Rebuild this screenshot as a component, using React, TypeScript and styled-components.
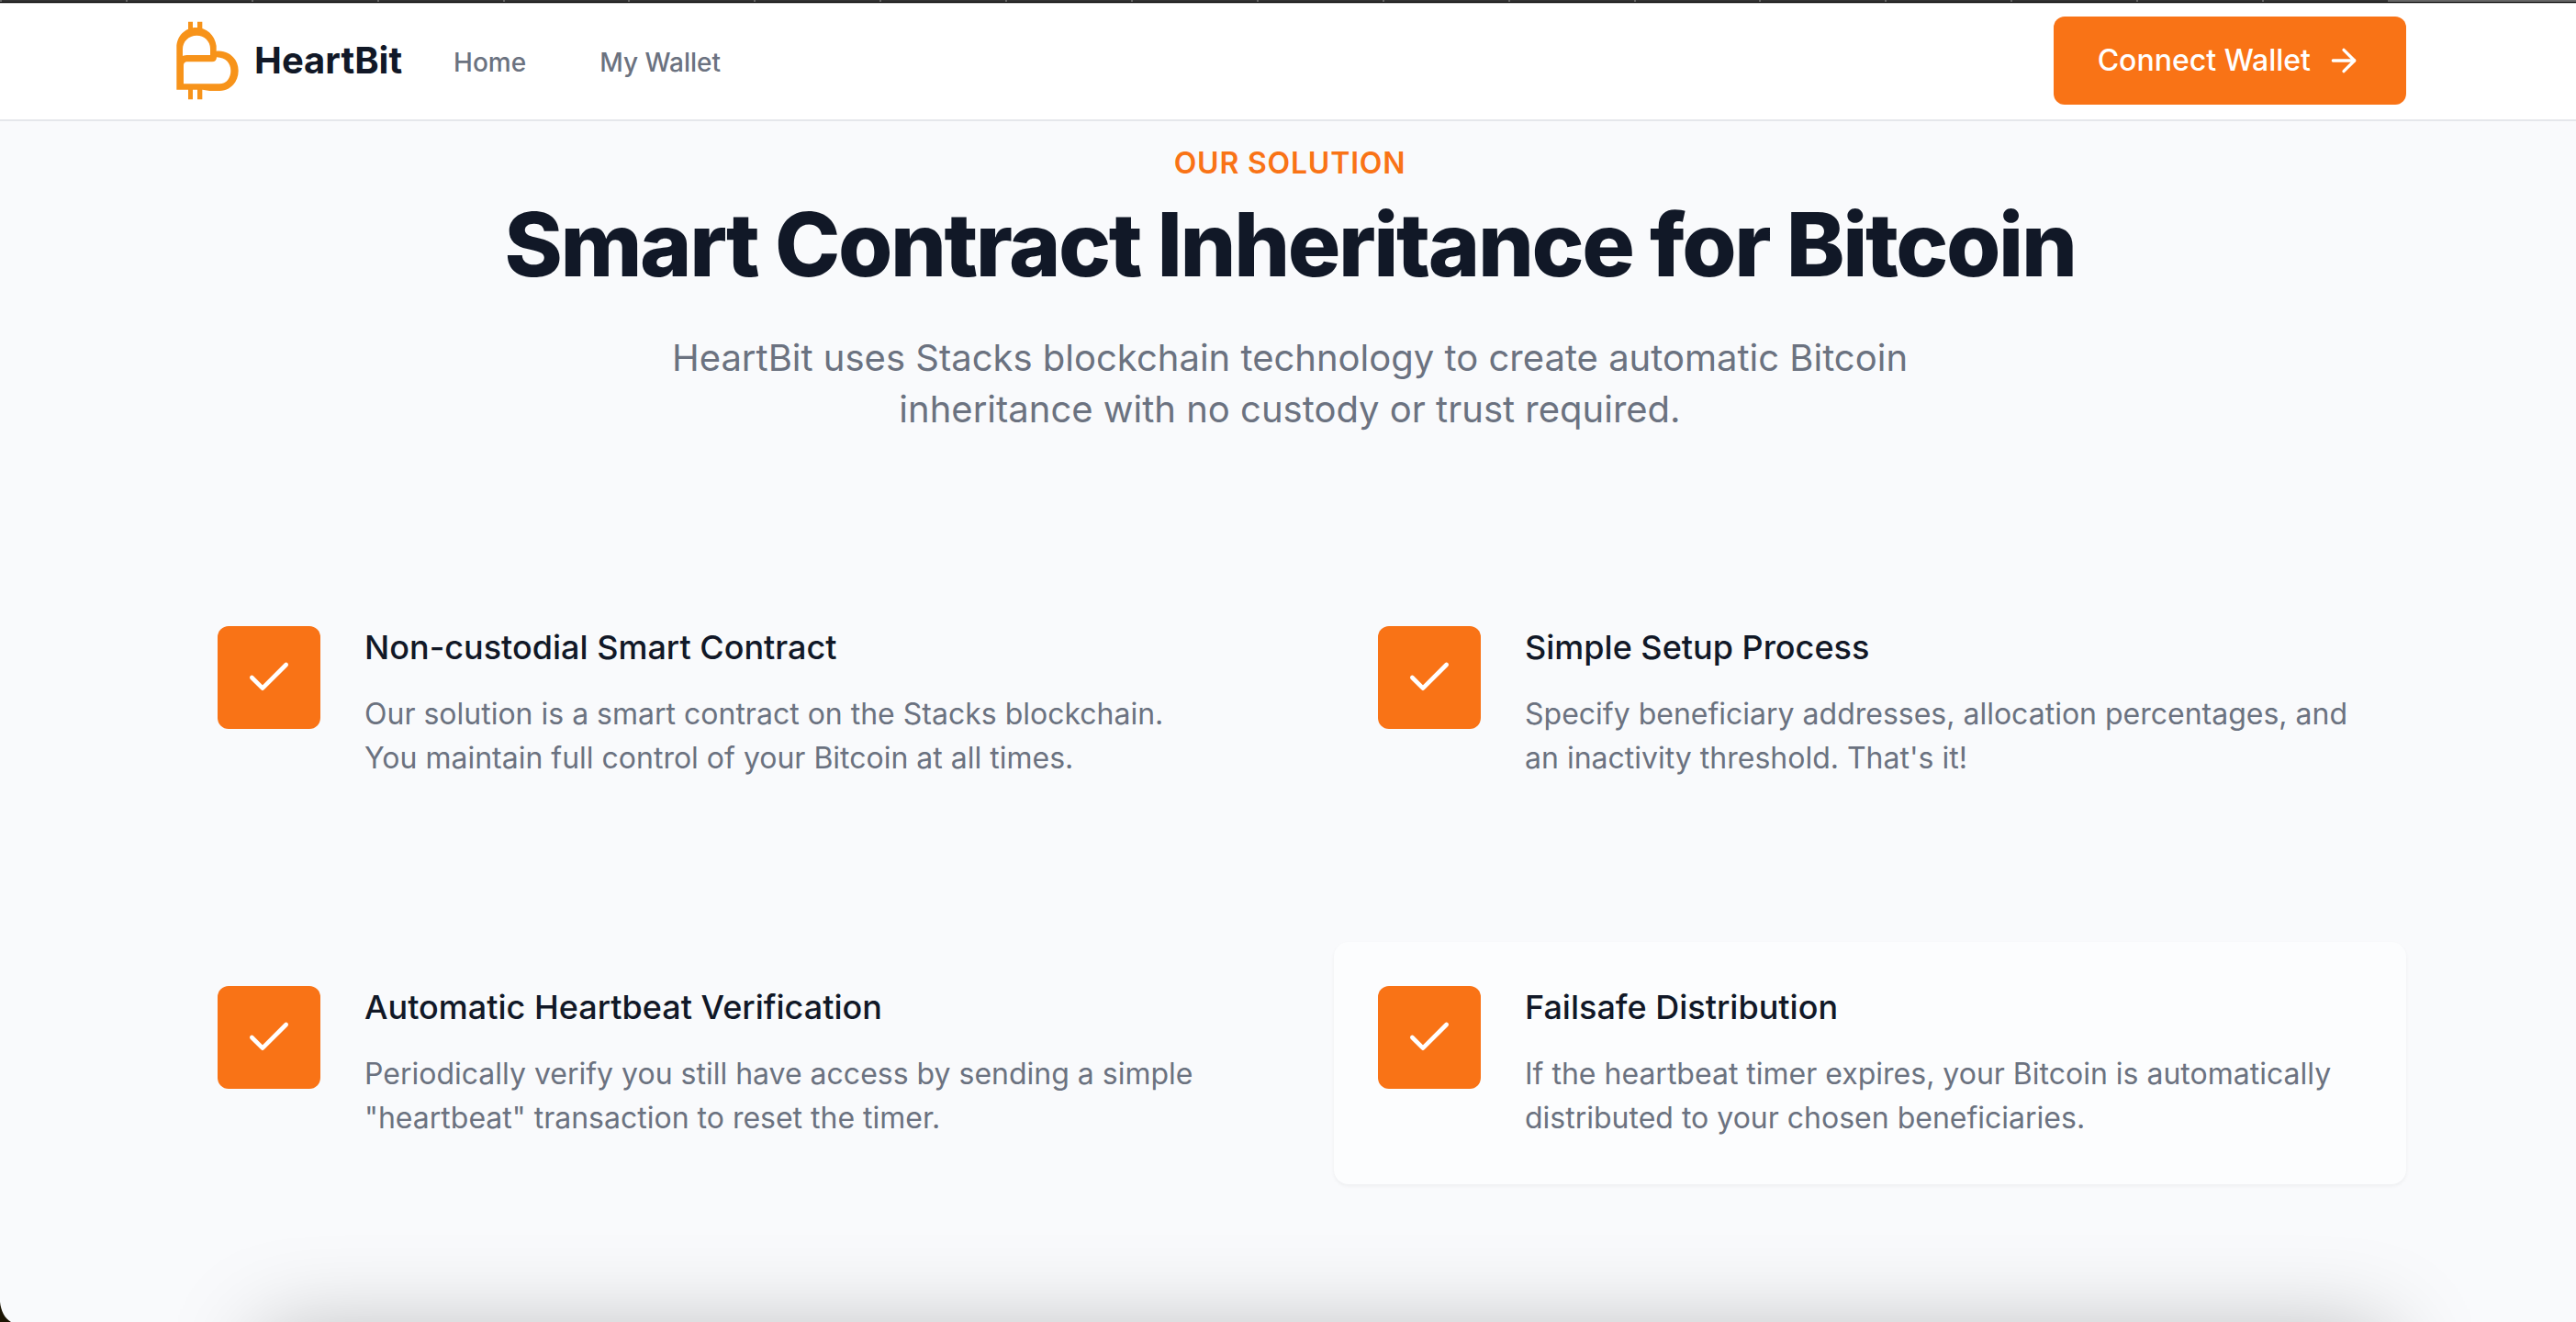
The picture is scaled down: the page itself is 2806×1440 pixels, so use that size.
import React from "react";
import styled, { createGlobalStyle } from "styled-components";
import { ArrowRight, Check } from "lucide-react";

const color = {
  orange: "#f97316",
  logo: "#f7931a",
  ink: "#111827",
  muted: "#6b7280",
  line: "#e5e7eb",
  page: "#f9fafc",
};

const GlobalStyle = createGlobalStyle`
  *, *::before, *::after { box-sizing: border-box; }
  body {
    margin: 0;
    background: ${color.page};
    color: ${color.ink};
    font-family: Inter, "Liberation Sans", sans-serif;
    -webkit-font-smoothing: antialiased;
  }
  h1, h2, h3, p { margin: 0; }
`;

const Page = styled.div`
  position: relative;
  min-height: 100vh;
  overflow: hidden;
  background: ${color.page};
`;

const TabStrip = styled.div`
  display: flex;
  height: 4px;
  background: #666;
  border-bottom: 1px solid #c4c4c4;
  box-shadow: inset 0 -1px 0 #000;
`;

const Tab = styled.span`
  flex: 1;
  height: 2px;
  background: #333;
  border-left: 2px solid #666;
`;

const TabStripEnd = styled.span`
  width: 205px;
  height: 2px;
`;

const Container = styled.div`
  max-width: 2560px;
  margin: 0 auto;
  padding: 0 62px 0 66px;
`;

const Header = styled.header`
  background: #fff;
  border-bottom: 2px solid ${color.line};
`;

const HeaderRow = styled(Container)`
  display: flex;
  align-items: center;
  justify-content: space-between;
  padding-top: 14px;
  padding-bottom: 16px;
`;

const HeaderLeft = styled.div`
  display: flex;
  align-items: center;
  gap: 48px;
`;

const Brand = styled.a`
  display: flex;
  align-items: center;
  gap: 8px;
  color: ${color.ink};
  font-size: 40px;
  line-height: 56px;
  font-weight: 700;
  text-decoration: none;
`;

const Nav = styled.nav`
  display: flex;
  gap: 64px;
`;

const NavLink = styled.a`
  padding: 8px 8px 0;
  border-bottom: 4px solid transparent;
  color: ${color.muted};
  font-size: 28px;
  line-height: 40px;
  font-weight: 500;
  text-decoration: none;
`;

const ConnectButton = styled.button`
  display: inline-flex;
  align-items: center;
  gap: 16px;
  padding: 24px 48px;
  border: 0;
  border-radius: 12px;
  background: ${color.orange};
  color: #fff;
  font-family: inherit;
  font-size: 32px;
  line-height: 48px;
  font-weight: 500;
  cursor: pointer;
`;

const Main = styled(Container).attrs({ as: "main" })`
  padding-top: 22px;
  padding-bottom: 128px;
`;

const Intro = styled.section`
  display: flex;
  flex-direction: column;
  align-items: center;
  text-align: center;
`;

const Eyebrow = styled.p`
  color: ${color.orange};
  font-size: 32px;
  line-height: 48px;
  font-weight: 600;
  letter-spacing: 0.025em;
  text-transform: uppercase;
`;

const Title = styled.h1`
  margin-top: 16px;
  font-size: 96px;
  line-height: 96px;
  font-weight: 800;
  letter-spacing: -0.025em;
`;

const Lead = styled.p`
  max-width: 1536px;
  margin-top: 48px;
  color: ${color.muted};
  font-size: 40px;
  line-height: 56px;
`;

const Features = styled.section`
  display: grid;
  grid-template-columns: repeat(2, minmax(0, 1fr));
  gap: 128px 96px;
  margin-top: 160px;
`;

const Card = styled.article<{ $raised?: boolean }>`
  display: flex;
  gap: 48px;
  padding: 48px;
  border-radius: 16px;
  background: ${(p) => (p.$raised ? "#fcfdfe" : "transparent")};
  box-shadow: ${(p) => (p.$raised ? "0 2px 4px rgba(0, 0, 0, 0.05)" : "none")};
`;

const IconTile = styled.div`
  display: flex;
  flex: none;
  align-items: center;
  justify-content: center;
  width: 112px;
  height: 112px;
  border-radius: 12px;
  background: ${color.orange};
  color: #fff;
`;

const CardBody = styled.div`
  display: flex;
  flex-direction: column;
  gap: 26px;
`;

const CardTitle = styled.h3`
  font-size: 36px;
  line-height: 46px;
  font-weight: 500;
`;

const CardText = styled.p`
  color: ${color.muted};
  font-size: 32px;
  line-height: 48px;
`;

const DockShadow = styled.div`
  position: absolute;
  top: calc(100vh + 10px);
  left: 285px;
  right: 205px;
  height: 200px;
  box-shadow: 0 0 100px rgba(0, 0, 0, 0.26);
  pointer-events: none;
`;

const WindowCorner = styled.svg`
  position: absolute;
  left: 0;
  top: calc(100vh - 22px);
`;

const Logo = () => (
  <svg width="80" height="96" viewBox="27 12 240 288" fill="none" aria-hidden="true">
    <g fill={color.logo}>
      <path d="M75 29h15v26H75zM105 29h16v26h-16zM75 248h15v35H75zM105 248h16v35h-16z" />
      <path
        fillRule="evenodd"
        d="M37 251V113C37 77 64 48 101 48C135 48 162 72 167 108V125C207 121 239 150 239 189C239 226 213 255 178 255H145L122 251ZM57 141C62 139 69 138 76 138H147V117C147 92 127 74 103 74C76 74 57 94 57 119ZM60 232H177C200 232 214 213 214 189C214 164 197 146 168 145C168 154 163 160 153 160H73C63 160 60 165 60 174Z"
      />
    </g>
  </svg>
);

const features = [
  {
    title: "Non-custodial Smart Contract",
    text: "Our solution is a smart contract on the Stacks blockchain. You maintain full control of your Bitcoin at all times.",
  },
  {
    title: "Simple Setup Process",
    text: "Specify beneficiary addresses, allocation percentages, and an inactivity threshold. That's it!",
  },
  {
    title: "Automatic Heartbeat Verification",
    text: 'Periodically verify you still have access by sending a simple "heartbeat" transaction to reset the timer.',
  },
  {
    title: "Failsafe Distribution",
    text: "If the heartbeat timer expires, your Bitcoin is automatically distributed to your chosen beneficiaries.",
    raised: true,
  },
];

const tabs = Array.from({ length: 19 }, (_, i) => i);

export default function App() {
  return (
    <>
      <GlobalStyle />
      <Page>
        <TabStrip aria-hidden="true">
          {tabs.map((t) => (
            <Tab key={t} />
          ))}
          <TabStripEnd />
        </TabStrip>
        <Header>
          <HeaderRow>
            <HeaderLeft>
              <Brand href="#home">
                <Logo />
                HeartBit
              </Brand>
              <Nav>
                <NavLink href="#home">Home</NavLink>
                <NavLink href="#wallet">My Wallet</NavLink>
              </Nav>
            </HeaderLeft>
            <ConnectButton type="button">
              Connect Wallet
              <ArrowRight size={40} aria-hidden="true" />
            </ConnectButton>
          </HeaderRow>
        </Header>
        <Main>
          <Intro>
            <Eyebrow>Our Solution</Eyebrow>
            <Title>Smart Contract Inheritance for Bitcoin</Title>
            <Lead>
              HeartBit uses Stacks blockchain technology to create automatic Bitcoin inheritance with no custody or
              trust required.
            </Lead>
          </Intro>
          <Features>
            {features.map((f) => (
              <Card key={f.title} $raised={f.raised}>
                <IconTile>
                  <Check size={56} aria-hidden="true" />
                </IconTile>
                <CardBody>
                  <CardTitle>{f.title}</CardTitle>
                  <CardText>{f.text}</CardText>
                </CardBody>
              </Card>
            ))}
          </Features>
        </Main>
        <DockShadow />
        <WindowCorner width="12" height="22" viewBox="0 0 12 22" aria-hidden="true">
          <path d="M0 0C1 10 5 18 12 22H0Z" fill="#1c1503" />
        </WindowCorner>
      </Page>
    </>
  );
}
